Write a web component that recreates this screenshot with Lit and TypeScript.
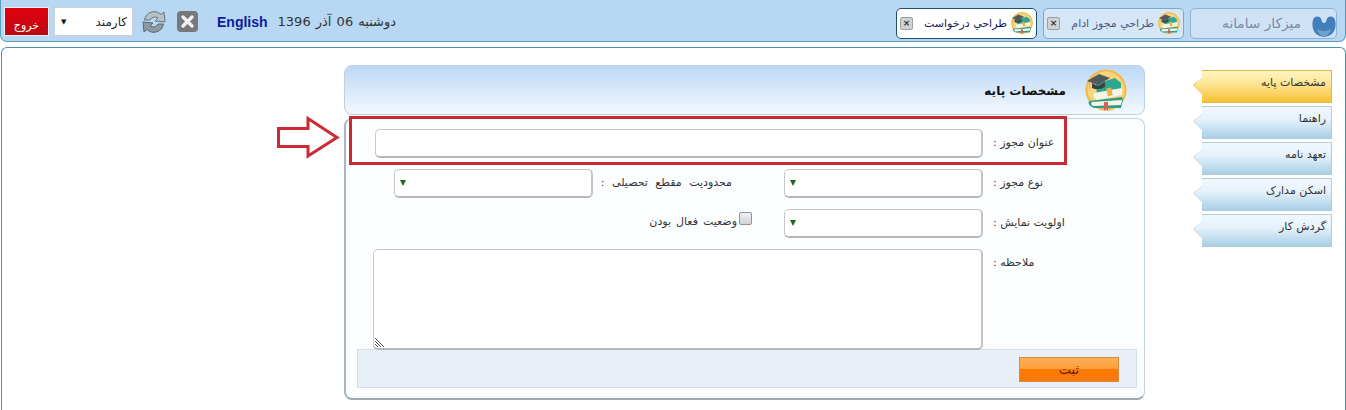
import { LitElement, html, css, svg } from "lit";
import { customElement } from "lit/decorators.js";

const bookIcon = (size: number) => html`<svg width=${size} height=${size} viewBox="0 0 42 42">
  <circle cx="21" cy="21" r="20.5" fill="#f7d57f"/>
  <path d="M21 .5 A20.5 20.5 0 0 1 21 41.500 A20.500 20.500 0 0 1 21 .5 Z M21 2.500 A18.500 18.500 0 0 0 21 39.500 A18.500 18.500 0 0 0 21 2.500 Z" fill="#f0b94e"/>
  <path d="M11 15 L30 9 L36 14 L36 21 L12 26 Z" fill="#2fa78f"/>
  <path d="M9 24 L37 19 L37 26 L12 31 Q7 28 9 24 Z" fill="#f7f5e8"/>
  <rect x="22" y="19" width="5" height="8" fill="#e8b24c" transform="rotate(-12 24 23)"/>
  <path d="M4 32 L37 28 L38 31 L36 39 L9 39 Q2 36 4 32 Z" fill="#2f9e84"/>
  <path d="M7 33 L37 31 L36 36 L8 37 Q5 35 7 33 Z" fill="#f7f5e8"/>
  <path d="M19 33 H23 V42 L21 40 L19 42 Z" fill="#d9605a"/>
  <path d="M2 12 L14 5 L25 9 L13 16 Z" fill="#50595c"/>
  <path d="M7 14 L13 17 L20 13 L20 18 Q13 22 7 19 Z" fill="#3a4347"/>
  <rect x="4" y="13" width="1.300" height="7" fill="#e8b24c"/>
</svg>`;

const refreshIcon = html`<svg width="24" height="24" viewBox="0 0 24 24">
  <path d="M2.500 10 A9.800 9.800 0 0 1 19 4.500 L22 2 L23 12 L13 11 L16 8 A5.500 5.500 0 0 0 8 10 Z" fill="#b7c1c7" stroke="#68747a" stroke-width="1"/>
  <path d="M21.500 14 A9.800 9.800 0 0 1 5 19.500 L2 22 L1 12 L11 13 L8 16 A5.500 5.500 0 0 0 16 14 Z" fill="#8e9aa0" stroke="#5c686e" stroke-width="1"/>
</svg>`;

const closeIcon = html`<svg width="21" height="21" viewBox="0 0 21 21">
  <rect width="21" height="21" rx="4" fill="#76797b"/>
  <path d="M6 6 L15 15 M15 6 L6 15" stroke="#f2f2f2" stroke-width="3.400" stroke-linecap="round"/>
</svg>`;

const homeIcon = html`<svg class="home-icon" width="24" height="22" viewBox="0 0 24 22">
  <path d="M1 4 Q2 0 6 0.500 Q9 1 9.500 4 Q10 7 12 7 Q14 7 14.500 4 Q15 1 18 0.500 Q22 0 23 4 Q25 12 20 18 Q12 24 4 18 Q-1 12 1 4 Z" fill="#447fbb"/>
  <path d="M5 13 Q12 17 19 13 Q17 20 12 20.500 Q7 20 5 13 Z" fill="#6f9fcc"/>
</svg>`;

const arrow = svg`<svg class="arrow" width="68" height="44" viewBox="0 0 68 44">
  <path d="M3.500 13.500 H33 V3.500 L62 22.500 L33 41 V31.500 H3.500 Z" fill="#fff" stroke="#cc2b33" stroke-width="3"/>
</svg>`;

@customElement("app-root")
export class AppRoot extends LitElement {
  static styles = css`
    :host {
      display: block;
      position: relative;
      width: 1346px;
      height: 410px;
      overflow: hidden;
      background: #fff;
      font-family: "DejaVu Sans", "Liberation Sans", sans-serif;
      font-size: 11px;
      color: #333;
    }
    .ar { direction: rtl; white-space: nowrap; }

    /* top bar */
    .top {
      box-sizing: border-box;
      height: 42px;
      display: flex;
      align-items: center;
      justify-content: space-between;
      padding: 0 8px 0 4px;
      background: #b7d7f3;
      border: 1px solid #5b9dbd;
      border-top: none;
      border-radius: 0 0 7px 7px;
    }
    .left, .right { display: flex; align-items: center; }
    .left { margin-top: 2px; }
    .right { margin-top: 5px; }
    .exit {
      box-sizing: border-box;
      width: 45px; height: 29px;
      display: flex; align-items: flex-end; justify-content: center;
      padding-bottom: 3px;
      margin-left: -1px;
      background: linear-gradient(#e0000e, #bd0a13);
      border: 1px solid #e9eef3;
      color: #fff;
      font-size: 11px;
    }
    .role {
      box-sizing: border-box;
      width: 79px; height: 29px;
      margin-left: 5px;
      display: flex; align-items: center; justify-content: space-between;
      padding: 0 5px 0 6px;
      background: #fff;
      border: 1px solid #c9d2da;
      color: #222;
      font-size: 12px;
    }
    .caret { font-size: 7px; color: #111; }
    .refresh { display: flex; margin-left: 9px; }
    .close { display: flex; margin-left: 11px; }
    .english {
      margin-left: 19px;
      font-family: "Liberation Sans", Arial, sans-serif;
      font-weight: 700;
      font-size: 14px;
      color: #0c1d9b;
    }
    .date { margin-left: 10px; font-size: 13px; color: #333; word-spacing: 1px; }

    .tab {
      box-sizing: border-box;
      width: 141px; height: 31px;
      margin-right: 6px;
      display: flex; align-items: center; justify-content: flex-start;
      flex-direction: row-reverse;
      padding: 0 3px;
      gap: 4px;
      border: 1px solid #7fa8c4;
      border-radius: 5px;
      background: #d5e6f7;
      color: #4a5a80;
    }
    .tab.on { background: #fff; border-color: #1f4f70; color: #1a1a50; }
    .tab .name { flex: 1; overflow: hidden; text-align: right; }
    .x {
      box-sizing: border-box;
      width: 13px; height: 13px;
      flex: none;
      display: flex; align-items: center; justify-content: center;
      background: #cfd3d6;
      border: 1px solid #9aa0a5;
      border-radius: 2px;
      font-size: 9px;
      line-height: 1;
      color: #333;
      font-weight: 700;
    }
    .home {
      box-sizing: border-box;
      width: 147px; height: 31px;
      display: flex; align-items: center; flex-direction: row-reverse;
      gap: 11px;
      padding: 0;
      border: 1px solid #8fb4cf;
      border-radius: 5px;
      background: #cfe2f5;
      color: #7a8ba8;
      font-size: 13.7px;
    }
    .home-icon { margin-top: 8px; }

    /* panel */
    .panel {
      box-sizing: border-box;
      height: 400px;
      margin: 5px 0 0 1px;
      display: flex;
      justify-content: flex-end;
      align-items: flex-start;
      gap: 48px;
      padding: 17px 12px 0 0;
      border: 1px solid #4d93b0;
      border-bottom: none;
      border-radius: 6px 6px 0 0;
    }

    .main { width: 801px; display: flex; flex-direction: column; gap: 3px; }
    .title {
      box-sizing: border-box;
      height: 50px;
      display: flex;
      align-items: center;
      justify-content: flex-end;
      gap: 19px;
      padding-right: 17px;
      background: linear-gradient(#bcd8f6, #f3f8fe);
      border: 1px solid #bcd0de;
      border-radius: 8px;
      color: #111;
      font-weight: 700;
      font-size: 12px;
    }
    .title .ar { padding-top: 2px; }
    .card {
      box-sizing: border-box;
      height: 282px;
      display: flex;
      flex-direction: column;
      gap: 11px;
      padding: 10px 7px 10px 0;
      background: #fbfdff;
      border: 1px solid #c3d4de;
      border-left: 2px solid #a9b7bf;
      border-bottom: 2px solid #9cabb3;
      border-radius: 8px;
    }
    .row { display: flex; justify-content: flex-end; align-items: flex-start; height: 29px; padding-right: 71px; }
    .row.tall { height: 101px; }
    .label { width: 73px; margin-left: 10px; text-align: left; direction: rtl; padding-top: 7px; white-space: nowrap; color: #333; }
    .input, .select, .area {
      box-sizing: border-box;
      background: #fff;
      border: 1px solid #c5c9cc;
      border-bottom: 2px solid #b4b8ba;
      border-right: 2px solid #c0c4c6;
      border-radius: 5px;
    }
    .input { width: 608px; height: 29px; }
    .select { width: 199px; height: 29px; display: flex; align-items: center; padding-left: 5px; }
    .tri { width: 0; height: 0; border: 3.500px solid transparent; border-top: 6px solid #1b6b1e; border-bottom: none; }
    .area { width: 610px; height: 101px; position: relative; }
    .grip { position: absolute; left: 0; bottom: 0; }
    .mid { margin: 0 52px 0 9px; width: 130px; padding-top: 7px; direction: rtl; white-space: nowrap; text-align: right; word-spacing: 4px; }
    .check { display: flex; align-items: flex-start; gap: 2px; margin-right: 32px; padding-top: 3px; }
    .check .ar { padding-top: 3px; word-spacing: 1.500px; }
    .box {
      box-sizing: border-box;
      width: 13px; height: 13px;
      background: linear-gradient(#eef0f2, #cfd3d6);
      border: 1px solid #8f9498;
      border-radius: 2px;
    }
    .foot {
      box-sizing: border-box;
      margin: -12px 0 0 11px;
      height: 40px;
      display: flex;
      justify-content: flex-end;
      align-items: center;
      padding: 2px 17px 0 0;
      background: #e9eff9;
      border: 1px solid #d5dfe8;
    }
    .btn {
      box-sizing: border-box;
      width: 100px; height: 25px;
      display: flex; align-items: center; justify-content: center;
      background: linear-gradient(#fdb05a 0, #fd9c36 50%, #fb7a05 50%, #fb7a05 100%);
      border: 1px solid #d98a3a;
      color: #6a1d00;
      font-size: 13px;
    }

    /* side */
    .side { width: 139px; display: flex; flex-direction: column; gap: 3px; margin: 5px 1px 0 0; }
    .side-tab {
      height: 33px;
      padding: 1px;
      box-sizing: border-box;
      background: #b4cbda;
      clip-path: polygon(9px 0, 100% 0, 100% 100%, 9px 100%, 9px 24px, 0 15px, 9px 8px);
    }
    .side-tab.on { background: #e0b944; }
    .side-in {
      height: 100%;
      box-sizing: border-box;
      padding: 5px 5px 0 0;
      text-align: right;
      direction: rtl;
      color: #333;
      background: linear-gradient(#f1f8ff 0, #e6f2fb 40%, #a8cfe6 100%);
      clip-path: polygon(8px 0, 100% 0, 100% 100%, 8px 100%, 8px 23px, 0 14px, 8px 7px);
    }
    .side-tab.on .side-in { background: linear-gradient(#fff4c4 0, #fde596 40%, #f7c233 100%); }

    /* annotation */
    .mark {
      position: absolute;
      left: 349px; top: 116px;
      width: 718px; height: 49px;
      box-sizing: border-box;
      border: 3px solid #c92a33;
    }
    .arrow { position: absolute; left: 275px; top: 115px; }
  `;

  render() {
    const sideItems = ["مشخصات پایه", "راهنما", "تعهد نامه", "اسکن مدارک", "گردش کار"];
    return html`
      <div class="top">
        <div class="left">
          <div class="exit ar">خروج</div>
          <div class="role"><span class="caret">▼</span><span class="ar">کارمند</span></div>
          <span class="refresh">${refreshIcon}</span>
          <span class="close">${closeIcon}</span>
          <span class="english">English</span>
          <span class="date ar">دوشنبه 06 آذر 1396</span>
        </div>
        <div class="right">
          <div class="tab on">${bookIcon(22)}<span class="name ar">طراحي درخواست</span><span class="x">×</span></div>
          <div class="tab">${bookIcon(22)}<span class="name ar">طراحي مجوز ادام</span><span class="x">×</span></div>
          <div class="home">${homeIcon}<span class="ar">میزکار سامانه</span></div>
        </div>
      </div>

      <div class="panel">
        <div class="main">
          <div class="title"><span class="ar">مشخصات پایه</span>${bookIcon(42)}</div>
          <div class="card">
            <div class="row"><div class="input"></div><div class="label">عنوان مجوز :</div></div>
            <div class="row">
              <div class="select"><i class="tri"></i></div>
              <div class="mid">محدودیت مقطع تحصیلی :</div>
              <div class="select"><i class="tri"></i></div>
              <div class="label">نوع مجوز :</div>
            </div>
            <div class="row">
              <div class="check"><span class="ar">وضعیت فعال بودن</span><i class="box"></i></div>
              <div class="select"><i class="tri"></i></div>
              <div class="label">اولویت نمایش :</div>
            </div>
            <div class="row tall">
              <div class="area">
                <svg class="grip" width="11" height="11" viewBox="0 0 11 11"><path d="M1 1 L10 10 M1 4 L7 10 M1 7 L4 10" stroke="#555" stroke-width="1"/></svg>
              </div>
              <div class="label">ملاحظه :</div>
            </div>
            <div class="foot"><div class="btn ar">ثبت</div></div>
          </div>
        </div>
        <div class="side">
          ${sideItems.map((t, i) => html`<div class="side-tab ${i === 0 ? "on" : ""}"><div class="side-in">${t}</div></div>`)}
        </div>
      </div>

      <div class="mark"></div>
      ${arrow}
    `;
  }
}
